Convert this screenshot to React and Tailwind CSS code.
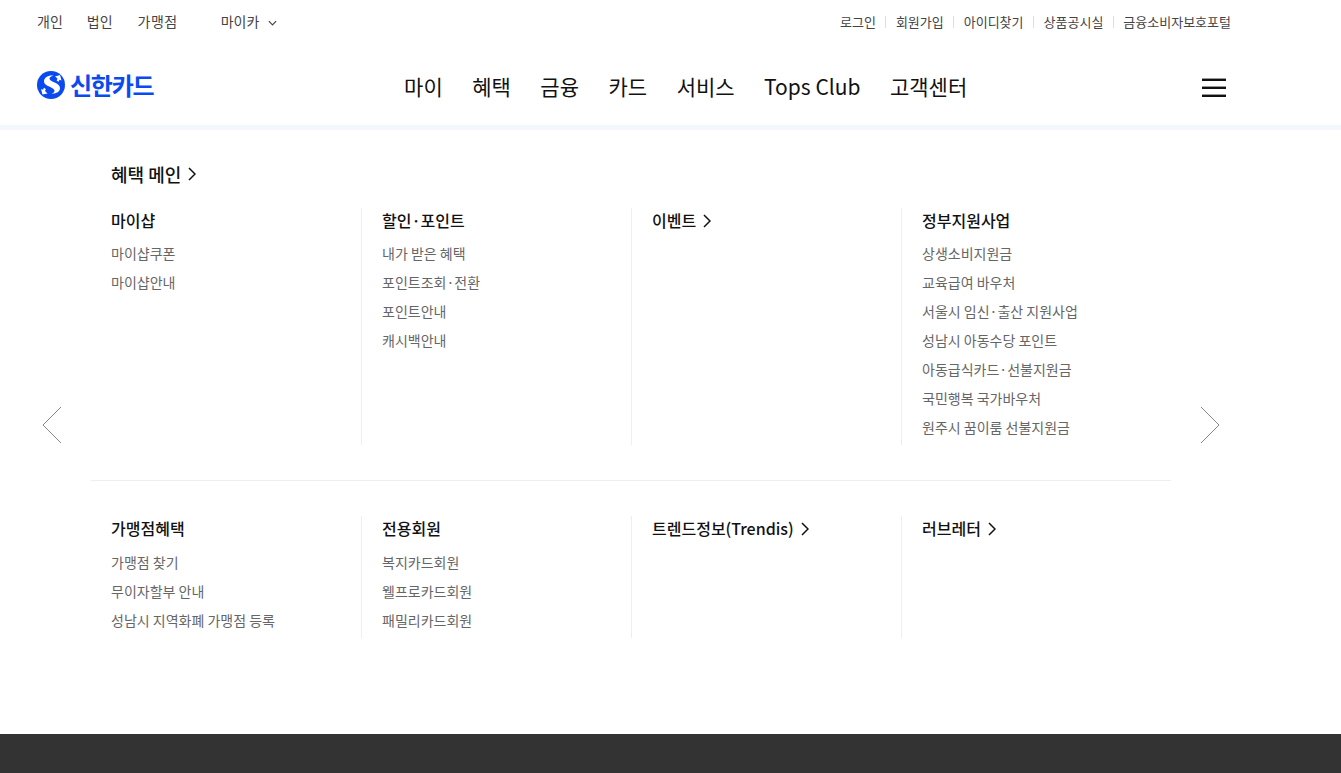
import React from "react";

const Chev = ({ className = "" }) => (
  <svg viewBox="0 0 8 14" className={className} fill="none" stroke="currentColor" strokeWidth="1.5">
    <path d="M1 1l6 6-6 6" />
  </svg>
);

const Logo = () => (
  <div className="flex items-center gap-[5px] mt-[2px]">
    <svg viewBox="0 0 28 28" className="w-[28px] h-[28px]">
      <circle cx="14" cy="14" r="14" fill="#0a4bf0" />
      <path
        d="M16.500 4.500C11 3.800 7 6.500 7 10.500c0 5 10.500 5.500 10.500 9.200 0 1.300-1 2.200-3 2.800 5.500.5 8.500-2.200 8.500-5.500 0-5.500-10.500-5.800-10.500-9.500 0-1.100 1.100-2.200 4-3z"
        fill="#fff"
      />
      <path d="M18 5.500l5-1.500 1.500 5.500-2-.8-1 2-1.800-1.200.8-2z" fill="#fff" />
      <path d="M10.500 22.500l-5 1-1.500-5.500 2 .8 1-2 1.800 1.200-.8 2z" fill="#fff" />
    </svg>
    <span className="text-[#0a4bf0] text-[24px] font-bold leading-none tracking-[-1.250px]">신한카드</span>
  </div>
);

const columns = [
  [
    { title: "마이샵", items: ["마이샵쿠폰", "마이샵안내"] },
    { title: "할인·포인트", items: ["내가 받은 혜택", "포인트조회·전환", "포인트안내", "캐시백안내"] },
    { title: "이벤트", link: true, items: [] },
    {
      title: "정부지원사업",
      items: [
        "상생소비지원금",
        "교육급여 바우처",
        "서울시 임신·출산 지원사업",
        "성남시 아동수당 포인트",
        "아동급식카드·선불지원금",
        "국민행복 국가바우처",
        "원주시 꿈이룸 선불지원금",
      ],
    },
  ],
  [
    { title: "가맹점혜택", items: ["가맹점 찾기", "무이자할부 안내", "성남시 지역화폐 가맹점 등록"] },
    { title: "전용회원", items: ["복지카드회원", "웰프로카드회원", "패밀리카드회원"] },
    { title: "트렌드정보(Trendis)", link: true, items: [] },
    { title: "러브레터", link: true, items: [] },
  ],
];

const Row = ({ cols, h, listGap }) => (
  <div className={`grid grid-cols-4 ${h}`}>
    {cols.map((c, i) => (
      <div key={c.title} className={`pl-5 ${i > 0 ? "border-l border-[#eeeeee]" : ""}`}>
        <div className="flex items-center gap-[7px] h-[25px] text-[16px] font-medium text-[#111111] leading-[25px]">
          {c.title}
          {c.link && <Chev className="w-[8px] h-[14px] text-[#111111]" />}
        </div>
        <ul className={`${listGap} flex flex-col`}>
          {c.items.map((t) => (
            <li key={t} className="h-[29px] text-[14px] leading-[29px] text-[#666666]">{t}</li>
          ))}
        </ul>
      </div>
    ))}
  </div>
);

const Sep = () => <span className="w-px h-[12px] bg-[#dddddd]" />;

const BurgerLine = () => <span className="h-[3px] border-t border-[#999999] bg-[#111111]" />;

export default function App() {
  return (
    <div className="w-full h-[773px] overflow-hidden flex flex-col bg-white font-['Noto_Sans_CJK_KR','Noto_Sans',sans-serif]">
      <header className="h-[125px] shrink-0 shadow-[0_5px_0_#f4f7fc] relative">
        <div className="h-[43px] flex items-center justify-between pl-[37px] pr-[110px] text-[#444444]">
          <div className="flex items-center text-[14px]">
            <span>개인</span>
            <span className="mx-[12px]"><Sep /></span>
            <span>법인</span>
            <span className="mx-[12.500px]"><Sep /></span>
            <span className="tracking-[0.5px]">가맹점</span>
            <span className="ml-[43px]">마이카</span>
            <svg viewBox="0 0 10 6" className="w-[9px] h-[6px] ml-[9px] mt-[2px]" fill="none" stroke="#444444" strokeWidth="1.3">
              <path d="M1 1l4 4 4-4" />
            </svg>
          </div>
          <div className="flex items-center gap-[9.500px] text-[13px]">
            <span>로그인</span><Sep />
            <span>회원가입</span><Sep />
            <span>아이디찾기</span><Sep />
            <span>상품공시실</span><Sep />
            <span>금융소비자보호포털</span>
          </div>
        </div>
        <div className="h-[82px] flex items-center justify-between pl-[37px] pr-[115px]">
          <Logo />
          <nav className="flex items-center gap-[29.500px] text-[21px] text-[#111111] mt-[5px] ml-[16px]">
            {["마이", "혜택", "금융", "카드", "서비스", "Tops Club", "고객센터"].map((t) => (
              <span key={t}>{t}</span>
            ))}
          </nav>
          <div className="w-[24px] flex flex-col gap-[5px] mt-[6px]">
            <BurgerLine />
            <BurgerLine />
            <BurgerLine />
          </div>
        </div>
      </header>

      <main className="flex-1 relative">
        <div className="w-[1080px] ml-[91px]">
          <div className="pl-5 pt-[35px] h-[83px] flex items-start gap-[7px]">
            <span className="text-[18px] font-medium text-[#111111] leading-[28px]">혜택 메인</span>
            <Chev className="w-[8px] h-[14px] mt-[7px] text-[#111111]" />
          </div>
          <Row cols={columns[0]} h="h-[237px]" listGap="mt-[6px]" />
          <div className="mt-[35px] mb-[35px] border-t border-[#eeeeee]" />
          <Row cols={columns[1]} h="h-[122px]" listGap="mt-[7px]" />
        </div>
        <svg viewBox="0 0 20 38" className="absolute left-[42px] top-[281px] w-[20px] h-[38px]" fill="none" stroke="#888888">
          <path d="M19 1L1 19l18 18" />
        </svg>
        <svg viewBox="0 0 20 38" className="absolute left-[1200px] top-[281px] w-[20px] h-[38px]" fill="none" stroke="#888888">
          <path d="M1 1l18 18L1 37" />
        </svg>
      </main>

      <footer className="h-[39px] shrink-0 bg-[#333333]" />
    </div>
  );
}
